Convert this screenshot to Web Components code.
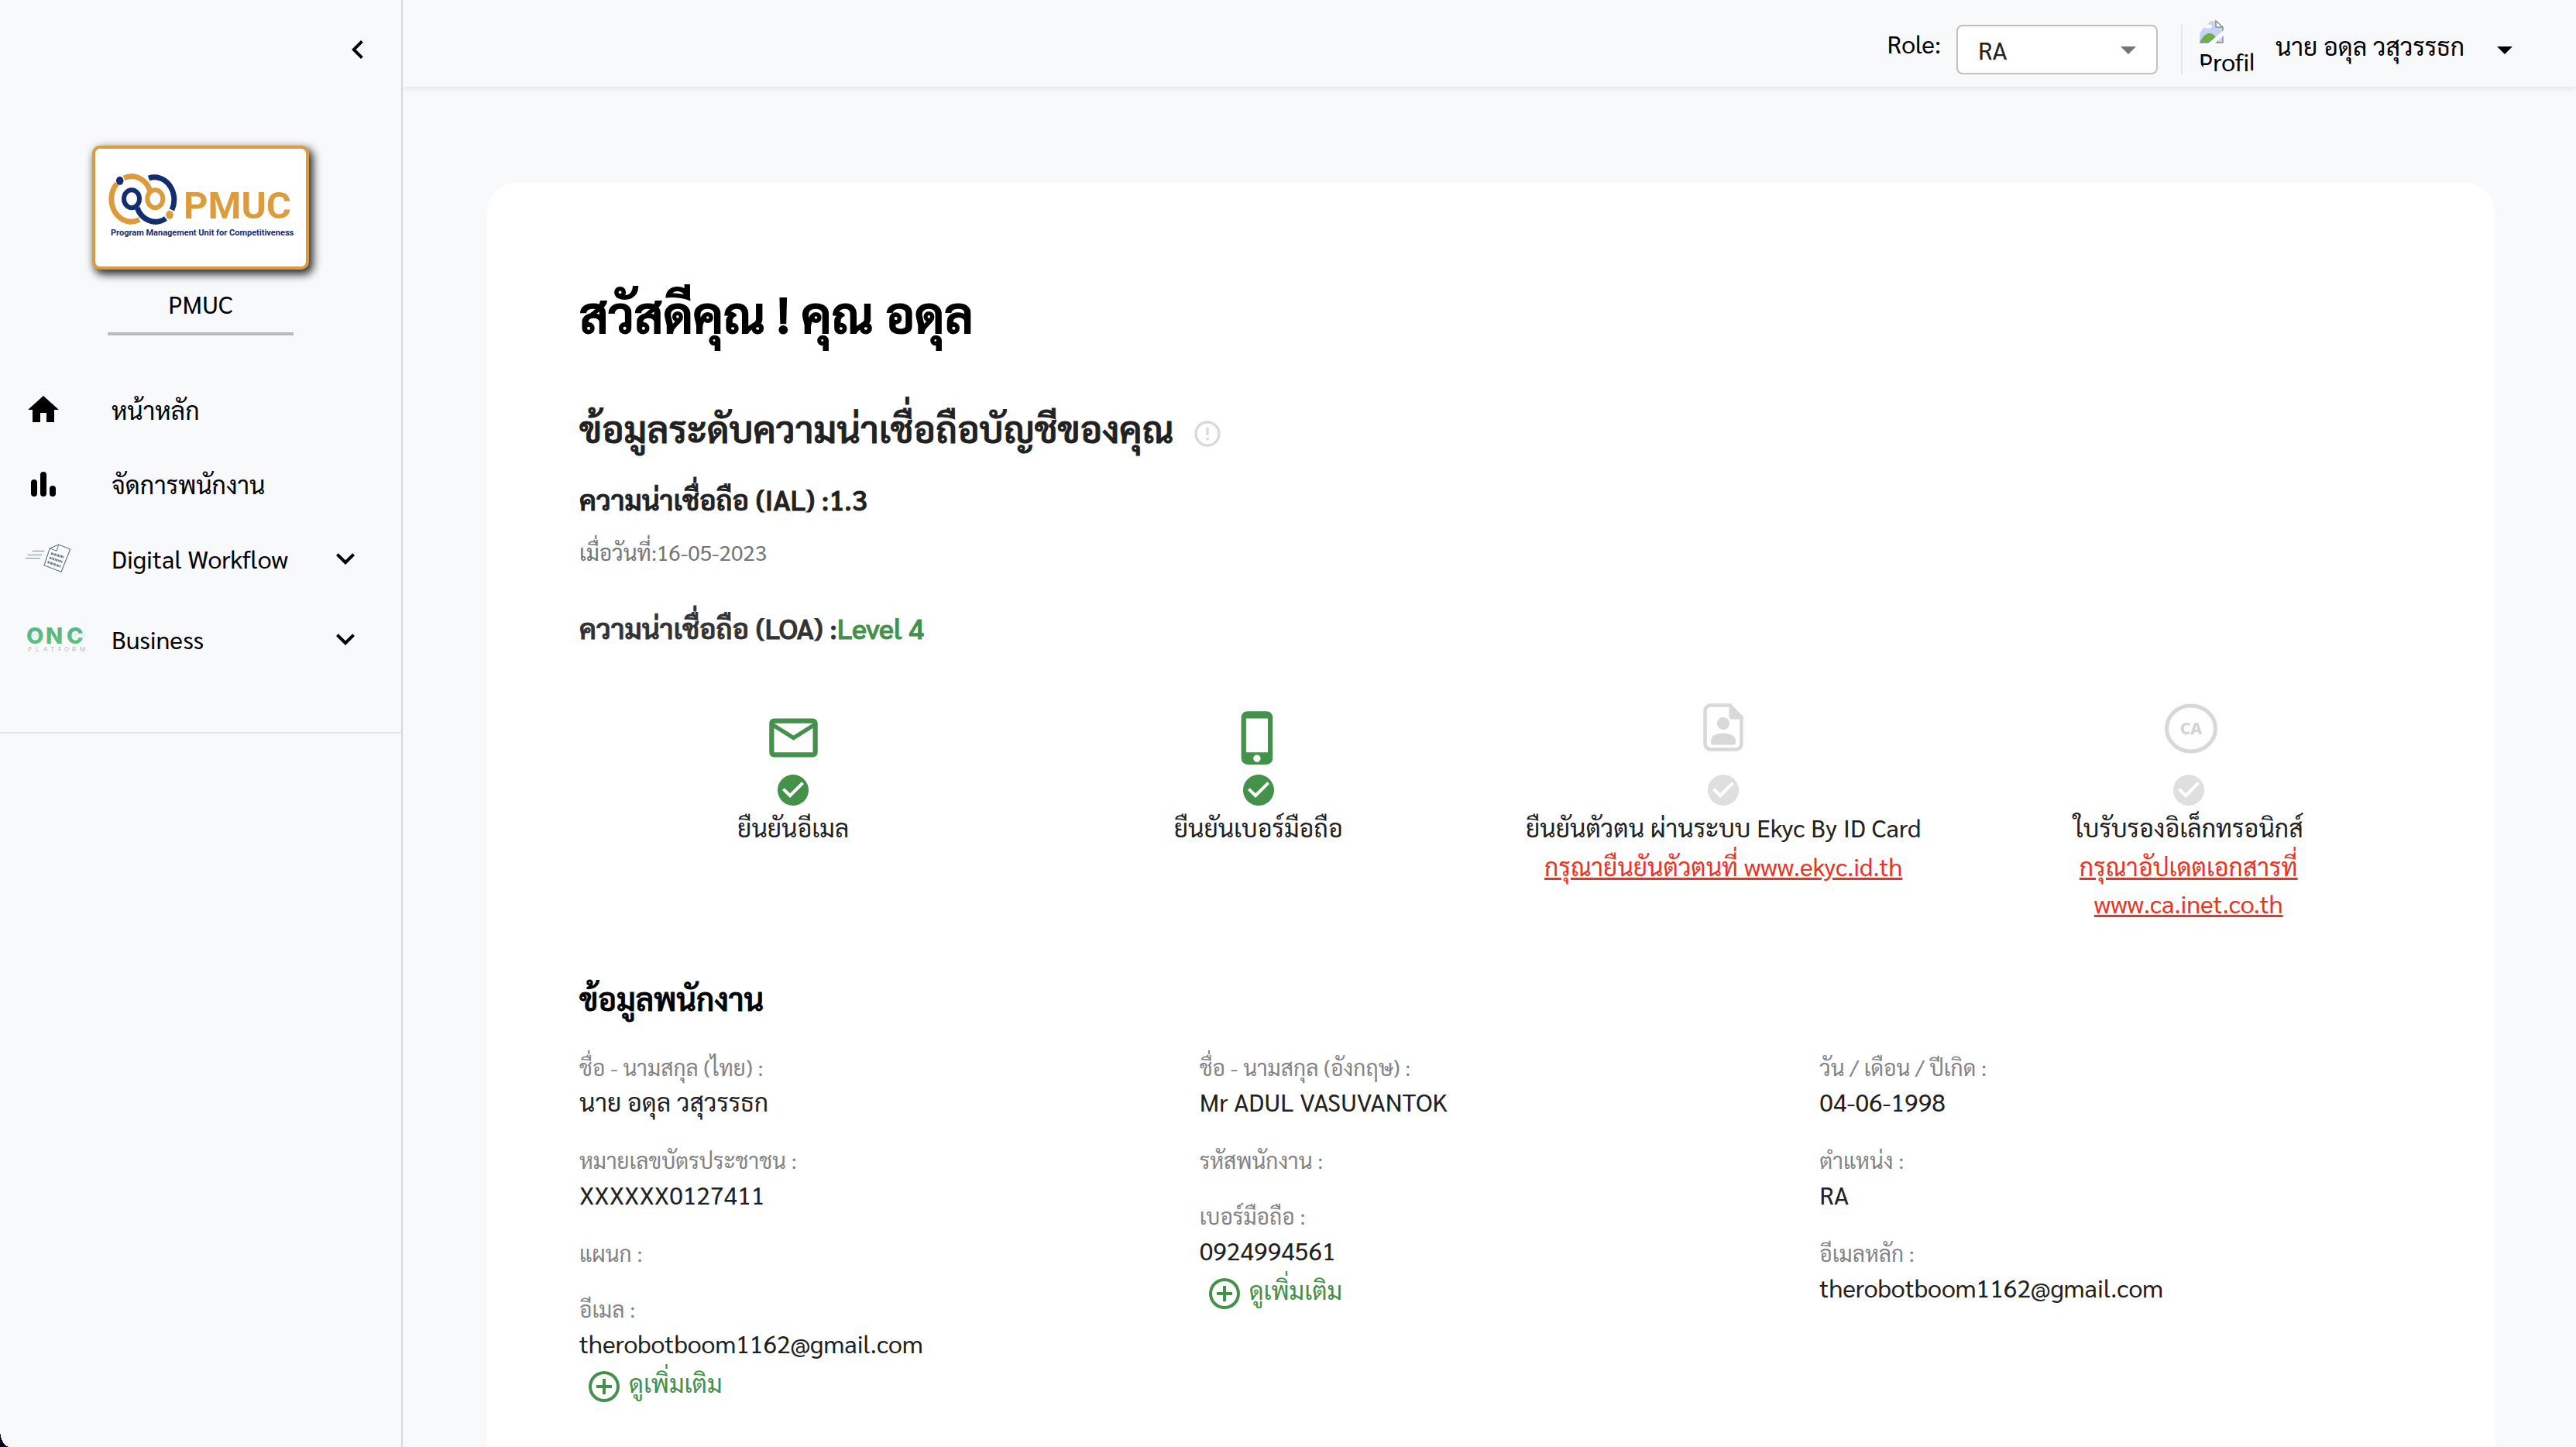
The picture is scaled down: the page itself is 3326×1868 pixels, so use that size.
<!DOCTYPE html>
<html lang="th">
<head>
<meta charset="utf-8">
<meta name="viewport" content="width=device-width, initial-scale=1">
<title>PMUC</title>
<style>
  :root {
    --bg: #f8f9fb;
    --text: #212121;
    --muted: #838383;
    --green: #43914b;
    --red: #ea3323;
    --off: #dfdfdf;
  }
  body { margin: 0; background: var(--bg); color: #000; font: 400 32px/48px Sarabun, "Noto Sans", sans-serif; }
</style>
</head>
<body>
<app-shell>
  <side-nav slot="side">
    <nav-item icon="home">หน้าหลัก</nav-item>
    <nav-item icon="chart">จัดการพนักงาน</nav-item>
    <nav-item icon="workflow" group>Digital Workflow</nav-item>
    <nav-item icon="one" group>Business</nav-item>
  </side-nav>
  <top-bar slot="top">นาย อดุล วสุวรรธก</top-bar>
  <profile-card>
    <span slot="title">สวัสดีคุณ ! คุณ อดุล</span>
    <verify-step slot="step" icon="mail" done>ยืนยันอีเมล</verify-step>
    <verify-step slot="step" icon="phone" done>ยืนยันเบอร์มือถือ</verify-step>
    <verify-step slot="step" icon="idcard">ยืนยันตัวตน ผ่านระบบ Ekyc By ID Card
      <a slot="link" href="#ekyc">กรุณายืนยันตัวตนที่ www.ekyc.id.th</a></verify-step>
    <verify-step slot="step" icon="ca">ใบรับรองอิเล็กทรอนิกส์
      <a slot="link" href="#ca">กรุณาอัปเดตเอกสารที่<br>www.ca.inet.co.th</a></verify-step>
    <info-field slot="c1" label="ชื่อ - นามสกุล (ไทย) :">นาย อดุล วสุวรรธก</info-field>
    <info-field slot="c1" label="หมายเลขบัตรประชาชน :">XXXXXX0127411</info-field>
    <info-field slot="c1" label="แผนก :"></info-field>
    <info-field slot="c1" label="อีเมล :" more>therobotboom1162@gmail.com</info-field>
    <info-field slot="c2" label="ชื่อ - นามสกุล (อังกฤษ) :">Mr ADUL VASUVANTOK</info-field>
    <info-field slot="c2" label="รหัสพนักงาน :"></info-field>
    <info-field slot="c2" label="เบอร์มือถือ :" more>0924994561</info-field>
    <info-field slot="c3" label="วัน / เดือน / ปีเกิด :">04-06-1998</info-field>
    <info-field slot="c3" label="ตำแหน่ง :">RA</info-field>
    <info-field slot="c3" label="อีเมลหลัก :">therobotboom1162@gmail.com</info-field>
  </profile-card>
</app-shell>

<script>
const glyph = (d, size = 48) =>
  `<svg width="${size}" height="${size}" viewBox="0 0 24 24" fill="currentColor" aria-hidden="true"><path d="${d}"/></svg>`;

const ICONS = {
  left: glyph('M15.41,16.58L10.83,12L15.41,7.41L14,6L8,12L14,18L15.41,16.58Z'),
  down: glyph('M7.41,8.58L12,13.17L16.59,8.58L18,10L12,16L6,10L7.41,8.58Z'),
  caret: glyph('M7,10L12,15L17,10H7Z'),
  home: glyph('M10,20V14H14V20H19V12H22L12,3L2,12H5V20H10Z'),
  chart: `<svg width="48" height="48" viewBox="0 0 24 24" aria-hidden="true"><rect x="4" y="9" width="4" height="11" rx="2"/><rect x="10" y="4" width="4" height="16" rx="2"/><rect x="16" y="13" width="4" height="7" rx="2"/></svg>`,
  mail: glyph('M4,4H20A2,2 0 0,1 22,6V18A2,2 0 0,1 20,20H4C2.89,20 2,19.1 2,18V6C2,4.89 2.89,4 4,4M4,8V18H20V8L12,13L4,8M4,6L12,11L20,6H4Z', 75),
  phone: glyph('M16,18H7V4H16M11.5,22A1.5,1.5 0 0,1 10,20.5A1.5,1.5 0 0,1 11.5,19A1.5,1.5 0 0,1 13,20.5A1.5,1.5 0 0,1 11.5,22M15.5,1H7.5A2.5,2.5 0 0,0 5,3.5V20.5A2.5,2.5 0 0,0 7.5,23H15.5A2.5,2.5 0 0,0 18,20.5V3.5A2.5,2.5 0 0,0 15.5,1Z', 75),
  check: glyph('M12 2C6.5 2 2 6.5 2 12S6.5 22 12 22 22 17.5 22 12 17.5 2 12 2M10 17L5 12L6.41 10.59L10 14.17L17.59 6.58L19 8L10 17Z'),
  alert: glyph('M11,15H13V17H11V15M11,7H13V13H11V7M12,2C6.47,2 2,6.5 2,12A10,10 0 0,0 12,22A10,10 0 0,0 22,12A10,10 0 0,0 12,2M12,20A8,8 0 0,1 4,12A8,8 0 0,1 12,4A8,8 0 0,1 20,12A8,8 0 0,1 12,20Z', 40),
  plus: glyph('M12,20C7.59,20 4,16.41 4,12C4,7.59 7.59,4 12,4C16.41,4 20,7.59 20,12C20,16.41 16.41,20 12,20M12,2A10,10 0 0,0 2,12A10,10 0 0,0 12,22A10,10 0 0,0 22,12A10,10 0 0,0 12,2M13,7H11V11H7V13H11V17H13V13H17V11H13V7Z'),
  idcard: `<svg width="52" height="62" viewBox="0 0 52 62" aria-hidden="true">
    <path d="M8 2.5H34.5L49.500 18V52.500a7 7 0 0 1-7 7H9.500a7 7 0 0 1-7-7V9.500a7 7 0 0 1 7-7Z" fill="none" stroke="#d8d8d8" stroke-width="4.500"/>
    <path d="M33.500 3L50 20.500H37a3.500 3.500 0 0 1-3.500-3.500Z" fill="#d8d8d8"/>
    <circle cx="26" cy="26" r="8" fill="#d8d8d8"/>
    <path d="M10 49C10 42 16 38.500 26 38.500S42 42 42 49V50.500a3 3 0 0 1-3 3H13a3 3 0 0 1-3-3Z" fill="#d8d8d8"/></svg>`,
  ca: `<svg width="76" height="66" viewBox="-4 0 76 66" aria-hidden="true">
    <ellipse cx="37" cy="32.500" rx="31.500" ry="29.500" fill="none" stroke="#d8d8d8" stroke-width="5"/>
    <text x="37" y="40" text-anchor="middle" font-family="'Noto Sans', sans-serif" font-weight="800" font-size="21" fill="#d4d4d4">CA</text></svg>`,
  workflow: `<svg width="60" height="38" viewBox="0 0 60 38" fill="none" stroke="#5b7085" aria-hidden="true">
    <path d="M9.700 9.300H25.300M3.700 14.300H22M.700 18.700H19.700" stroke="#92a0ae" stroke-width="1.300"/>
    <path d="M43.700 1L58.700 7L47 36.300L25 27.700L32.300 6Z" fill="#fff" stroke-width="1.100"/>
    <path d="M43.700 1L41.300 9.300L32.300 6" stroke-width="1"/>
    <path d="M34 12.500L51 17.500M32 18L49 23.500M29.500 23.500L46.500 29.500" stroke-width="3" stroke-dasharray="2 .8 1 .6"/></svg>`,
  one: `<svg width="84" height="56" viewBox="0 -9 84 56" aria-hidden="true">
    <defs><linearGradient id="g" x1="0" y1="0" x2="0" y2="1"><stop offset="0" stop-color="#4fb08a"/><stop offset="1" stop-color="#62c47c"/></linearGradient></defs>
    <text x="2 27 54" y="25" font-family="Inter, sans-serif" font-weight="800" font-size="29" fill="url(#g)">ONC</text>
    <circle cx="14" cy="14.500" r="2.500" fill="#fff" stroke="#d4d8da"/>
    <rect x="65" y="12.500" width="12" height="4" rx="2" fill="#fff" stroke="#d4d8da"/>
    <text x="4 14 24 33 43 51 61 71" y="34.500" font-family="Inter, sans-serif" font-size="8" fill="#bdbdbd">PLATFORM</text></svg>`,
  logo: `<svg viewBox="4 4 272 152" role="img" aria-label="PMUC">
    <g fill="none" stroke-width="7">
      <path d="M73 42A25.500 29 0 0 1 103 83M95 94A25.500 29 0 0 1 58 80" stroke="#132e70"/>
      <path d="M41 42A25.500 29 0 0 1 75 59M32 49A25.500 29 0 0 0 61 95.500" stroke="#dc9b3d"/>
      <ellipse cx="51" cy="68.700" rx="10" ry="11.500" stroke="#132e70" stroke-width="6"/>
      <ellipse cx="81.300" cy="68.700" rx="10" ry="11.500" stroke="#dc9b3d" stroke-width="6"/>
    </g>
    <ellipse cx="35.700" cy="45.300" rx="4.800" ry="5.500" fill="#132e70"/>
    <ellipse cx="100" cy="89.300" rx="4.800" ry="5.500" fill="#dc9b3d"/>
    <text x="118" y="94" font-family="Roboto, sans-serif" font-weight="700" font-size="49" fill="#dc9b3d">PMUC</text>
    <text x="24" y="116" font-family="Roboto, sans-serif" font-weight="700" font-size="11" fill="#132e70">Program Management Unit for Competitiveness</text></svg>`,
  broken: `<svg width="32" height="32" viewBox="0 0 32 32" aria-hidden="true">
    <path d="M1 3H22L31 12V31H1Z" fill="#c5d4f2"/>
    <path d="M1 31C5 22 10 19 14 19S22 22 26 31Z" fill="#6fac4a"/>
    <ellipse cx="12" cy="10" rx="5" ry="2.500" fill="#fff"/>
    <path d="M22 3V11H31Z" fill="#fff" stroke="#8e8e8e" stroke-width="1.500"/>
    <path d="M31 11V31H1" fill="none" stroke="#8e8e8e" stroke-width="1.500"/>
    <path d="M12 32L32 15V22L21 32Z" fill="#f8f9fb"/></svg>`
};

class Base extends HTMLElement {
  connectedCallback() {
    if (this.shadowRoot) return;
    this.attachShadow({ mode: 'open' }).innerHTML =
      '<style>:host,*{box-sizing:border-box}svg{display:block;flex:none}button{border:0;background:none;padding:0;margin:0;font:inherit;color:inherit;cursor:pointer}h1,h2,h3,p{margin:0}</style>' + this.render();
  }
}

customElements.define('app-shell', class extends Base {
  render() {
    return `<style>
      :host { display: flex; height: 100vh; overflow: hidden; background: var(--bg); }
      aside { flex: none; width: 520px; border-right: 2px solid #d6d7da; }
      .page { flex: 1; min-width: 0; display: flex; flex-direction: column; }
      main { flex: 1; min-height: 0; overflow: auto; scrollbar-width: none; padding: 124px 104px 0 108px; }
      .corner { position: absolute; left: 0; bottom: 0; width: 12px; height: 22px;
        background: radial-gradient(ellipse 12px 22px at 100% 0, transparent 98%, #0b0322 100%); }
    </style>
    <aside><slot name="side"></slot></aside>
    <div class="page"><slot name="top"></slot><main><slot></slot></main></div>
    <div class="corner"></div>`;
  }
});

customElements.define('side-nav', class extends Base {
  render() {
    return `<style>
      :host { display: flex; flex-direction: column; }
      .fold { align-self: flex-end; margin: 40px 32px 100px 0; }
      .logo { align-self: center; width: 280px; height: 160px; border: 4px solid #dc9b3d; border-radius: 10px;
        background: #fff; box-shadow: 4px 5px 12px 1px rgba(0,0,0,.85); }
      .org { text-align: center; margin-top: 20px; }
      hr { align-self: center; width: 240px; height: 4px; margin: 13px 0 48px; border: 0; background: #b9b9bb; }
      nav { padding-bottom: 64px; border-bottom: 2px solid #e5e7ea; }
    </style>
    <button class="fold" aria-label="ย่อเมนู">${ICONS.left}</button>
    <div class="logo">${ICONS.logo}</div>
    <div class="org">PMUC</div><hr>
    <nav><slot></slot></nav>`;
  }
});

customElements.define('nav-item', class extends Base {
  render() {
    const group = this.hasAttribute('group');
    const inner = `<span class="icon">${ICONS[this.getAttribute('icon')]}</span><span class="text"><slot></slot></span>${group ? ICONS.down : ''}`;
    return `<style>
      :host { display: block; }
      a, button { display: flex; align-items: center; width: 100%; height: 96px; padding: 0 48px 0 32px; color: #000; text-decoration: none; text-align: left; }
      button { height: 104px; padding-bottom: 8px; }
      .icon { flex: none; width: 112px; }
      .text { flex: 1; white-space: nowrap; }
    </style>${group ? `<button aria-expanded="false">${inner}</button>` : `<a href="#">${inner}</a>`}`;
  }
});

customElements.define('top-bar', class extends Base {
  render() {
    return `<style>
      :host { display: flex; justify-content: flex-end; align-items: flex-start; flex: none; height: 112px;
        padding: 32px 68px 0; box-shadow: 0 2px 8px rgba(0,0,0,.1); clip-path: inset(0 0 -16px 0); }
      label { margin-right: 20px; }
      .box { position: relative; width: 260px; height: 64px; color: #757575; }
      select { appearance: none; width: 100%; height: 100%; padding: 0 64px 0 26px; border: 2px solid #c0c0c0; border-radius: 8px;
        background: #fff; font: inherit; color: var(--text); }
      .box svg { position: absolute; top: 8px; right: 14px; pointer-events: none; }
      .line { width: 2px; height: 64px; margin: 0 18px 0 30px; background: #e4e5e8; }
      .avatar { width: 84px; height: 84px; margin: -12px 18px 0 0; padding: 4px 0 0 3px; border-radius: 50%; overflow: hidden; line-height: 46px; }
      .user { display: flex; align-items: flex-start; gap: 24px; }
      .user span { min-width: 248px; line-height: 54px; text-align: left; }
      .user svg { margin-top: 8px; }
    </style>
    <label for="role">Role:</label>
    <div class="box"><select id="role"><option>RA</option></select>${ICONS.caret}</div>
    <div class="line"></div>
    <div class="avatar">${ICONS.broken}Profil</div>
    <button class="user"><span><slot></slot></span>${ICONS.caret}</button>`;
  }
});

customElements.define('profile-card', class extends Base {
  render() {
    return `<style>
      :host { display: block; padding: 120px 96px 96px; border-radius: 40px 40px 0 0; background: #fff; color: var(--text); }
      .head { padding: 0 24px; }
      h1, h2, h3 { font-weight: 500; -webkit-text-stroke: 1px currentColor; }
      h1 { font-size: 64px; line-height: 96px; color: #000; -webkit-text-stroke-width: 2px; }
      h2 { font-size: 48px; line-height: 72px; }
      .row { display: flex; align-items: center; gap: 24px; margin: 64px 0 28px; }
      .row button { padding-top: 16px; color: #d9d9d9; }
      h3 { font-size: 36px; line-height: 56px; }
      .date { margin: 18px 0 48px; font-size: 28px; line-height: 44px; color: #757575; }
      .loa { color: #333; } .loa b { font-weight: inherit; color: var(--green); -webkit-text-stroke-color: var(--green); }
      .steps { display: grid; grid-template-columns: repeat(4, 1fr); margin: 70px 0 68px; }
      .staff { font-size: 40px; line-height: 60px; color: #000; margin-bottom: 38px; padding: 0 24px; }
      .info { display: grid; grid-template-columns: repeat(3, 1fr); align-items: start; }
      .info div { display: flex; flex-direction: column; gap: 30px; padding: 0 24px; }
    </style>
    <div class="head">
      <h1><slot name="title"></slot></h1>
      <div class="row"><h2>ข้อมูลระดับความน่าเชื่อถือบัญชีของคุณ</h2><button aria-label="รายละเอียด">${ICONS.alert}</button></div>
      <h3>ความน่าเชื่อถือ (IAL) :1.3</h3>
      <p class="date">เมื่อวันที่:16-05-2023</p>
      <h3 class="loa">ความน่าเชื่อถือ (LOA) :<b>Level 4</b></h3>
    </div>
    <div class="steps"><slot name="step"></slot></div>
    <h3 class="staff">ข้อมูลพนักงาน</h3>
    <div class="info"><div><slot name="c1"></slot></div><div><slot name="c2"></slot></div><div><slot name="c3"></slot></div></div>`;
  }
});

customElements.define('verify-step', class extends Base {
  render() {
    return `<style>
      :host { display: flex; flex-direction: column; align-items: center; text-align: center; color: var(--text); }
      .icon { display: flex; align-items: flex-start; height: 88px; }
      :host([done]) .icon { align-items: center; }
      .icon, .check { color: var(--off); }
      :host([done]) .icon, :host([done]) .check { color: var(--green); }
      .text { margin-bottom: 2px; }
      ::slotted(a) { color: var(--red); }
    </style>
    <div class="icon">${ICONS[this.getAttribute('icon')]}</div>
    <div class="check">${ICONS.check}</div>
    <div class="text"><slot></slot></div>
    <slot name="link"></slot>`;
  }
});

customElements.define('info-field', class extends Base {
  render() {
    const more = this.hasAttribute('more')
      ? `<button>${ICONS.plus}<span>ดูเพิ่มเติม</span></button>` : '';
    return `<style>
      :host { display: block; color: var(--text); }
      .label { font-size: 28px; line-height: 42px; color: var(--muted); }
      button { display: flex; align-items: flex-end; gap: 8px; height: 56px; padding-left: 8px; color: var(--green); }
      button span { align-self: flex-start; line-height: 54px; }
    </style>
    <div class="label">${this.getAttribute('label')}</div>
    <div><slot></slot></div>${more}`;
  }
});
</script>
</body>
</html>
